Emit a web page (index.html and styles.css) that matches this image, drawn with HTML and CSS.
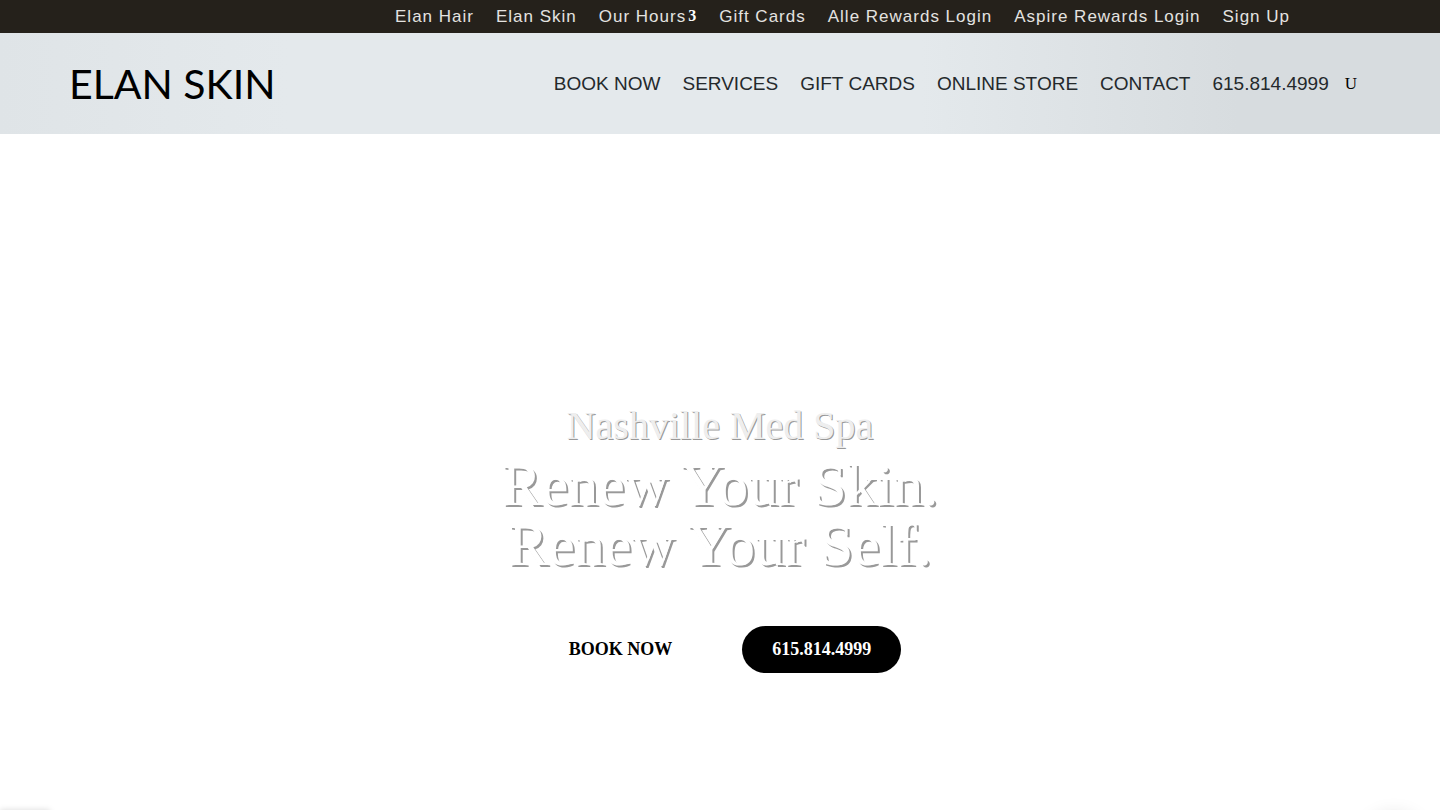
FILE: index.html
```
<!DOCTYPE html>
<html lang="en">

<head>
    <meta charset="UTF-8">
    <meta name="viewport" content="width=device-width, initial-scale=1">
    <title>Elan Skin | Nashville Med Spa</title>
    <link rel="stylesheet" href="styles.css">
</head>

<body>

    <nav class="top-bar" aria-label="Secondary">
        <a href="#">Elan Hair</a>
        <a href="#">Elan Skin</a>
        <a href="#" class="has-arrow">Our Hours<span class="arrow">3</span></a>
        <a href="#">Gift Cards</a>
        <a href="#">Alle Rewards Login</a>
        <a href="#">Aspire Rewards Login</a>
        <a href="#">Sign Up</a>
    </nav>

    <header class="header">
        <a href="#" class="logo">ELAN SKIN</a>
        <div class="menu">
            <nav class="menu-links" aria-label="Main">
                <a href="#">BOOK NOW</a>
                <a href="#">SERVICES</a>
                <a href="#">GIFT CARDS</a>
                <a href="#">ONLINE STORE</a>
                <a href="#">CONTACT</a>
                <a href="#">615.814.4999</a>
            </nav>
            <button type="button" class="search" aria-label="Search">U</button>
        </div>
    </header>

    <main class="hero">
        <h2>Nashville Med Spa</h2>
        <h1>Renew Your Skin.<br>Renew Your Self.</h1>
        <div class="hero-buttons">
            <a href="#" class="btn btn-light">BOOK NOW</a>
            <a href="#" class="btn btn-dark">615.814.4999</a>
        </div>
    </main>

    <div class="widget widget-left"></div>
    <div class="widget widget-right"></div>

</body>

</html>
```
FILE: styles.css
```
* {
    box-sizing: border-box;
}

body {
    margin: 0;
    min-height: 100vh;
    display: flex;
    flex-direction: column;
    background: white;
    font-family: "Liberation Sans", Arial, sans-serif;
}

a {
    color: inherit;
    text-decoration: none;
}

.top-bar {
    display: flex;
    justify-content: flex-end;
    gap: 22px;
    padding: 7px 150px 6px;
    background: #25211b;
    color: #e4e3e0;
    font-size: 17px;
    font-weight: 300;
    line-height: 20px;
    letter-spacing: 1px;
    white-space: nowrap;
}

.has-arrow {
    display: flex;
    gap: 2px;
}

.arrow {
    font-family: "Liberation Serif", "Times New Roman", serif;
    font-size: 16px;
    font-weight: 700;
    line-height: 18px;
    color: white;
}

.header {
    display: flex;
    align-items: center;
    justify-content: space-between;
    padding: 26px 83px 25px 69px;
    background: linear-gradient(to right, #dfe4e7 0%, #e4e9ec 20%, #e4e9ec 64%, #d7dcdf 86%);
    color: #24292c;
}

.logo {
    font-family: Lato, sans-serif;
    font-size: 41px;
    line-height: 50px;
    color: black;
}

.menu {
    display: flex;
    align-items: center;
    gap: 16px;
}

.menu-links {
    display: flex;
    gap: 22px;
    font-size: 19px;
    line-height: 24px;
    white-space: nowrap;
}

.search {
    padding: 0;
    border: none;
    background: none;
    color: black;
    font-family: "Liberation Serif", "Times New Roman", serif;
    font-size: 17px;
    line-height: 24px;
    cursor: pointer;
}

.hero {
    flex: 1;
    display: flex;
    flex-direction: column;
    align-items: center;
    justify-content: flex-end;
    padding: 40px 20px 137px;
    font-family: "Liberation Serif", "Times New Roman", serif;
    text-align: center;
}

.hero h2 {
    margin: 0 0 9px;
    font-size: 40px;
    font-weight: 400;
    line-height: 40px;
    color: #eee;
    text-shadow: 1px 1px 0 #999;
}

.hero h1 {
    margin: 0;
    font-size: 60px;
    font-weight: 400;
    line-height: 60px;
    color: white;
    text-shadow: 2px 2px 0 #999;
}

.hero-buttons {
    display: flex;
    flex-wrap: wrap;
    justify-content: center;
    gap: 40px;
    margin-top: 51px;
}

.btn {
    padding: 12px 30px;
    border-radius: 24px;
    font-size: 18px;
    font-weight: 700;
    line-height: 23px;
}

.btn-light {
    background: white;
    color: black;
}

.btn-dark {
    background: black;
    color: white;
}

.widget {
    position: fixed;
    top: 100%;
    height: 60px;
    background: white;
}

.widget-left {
    left: 0;
    width: 50px;
    box-shadow: 0 0 6px rgba(0, 0, 0, 0.15);
}

.widget-right {
    right: 16px;
    width: 60px;
    margin-top: 6px;
    border-radius: 30px;
    box-shadow: 0 0 20px rgba(0, 0, 0, 0.15);
}
```
